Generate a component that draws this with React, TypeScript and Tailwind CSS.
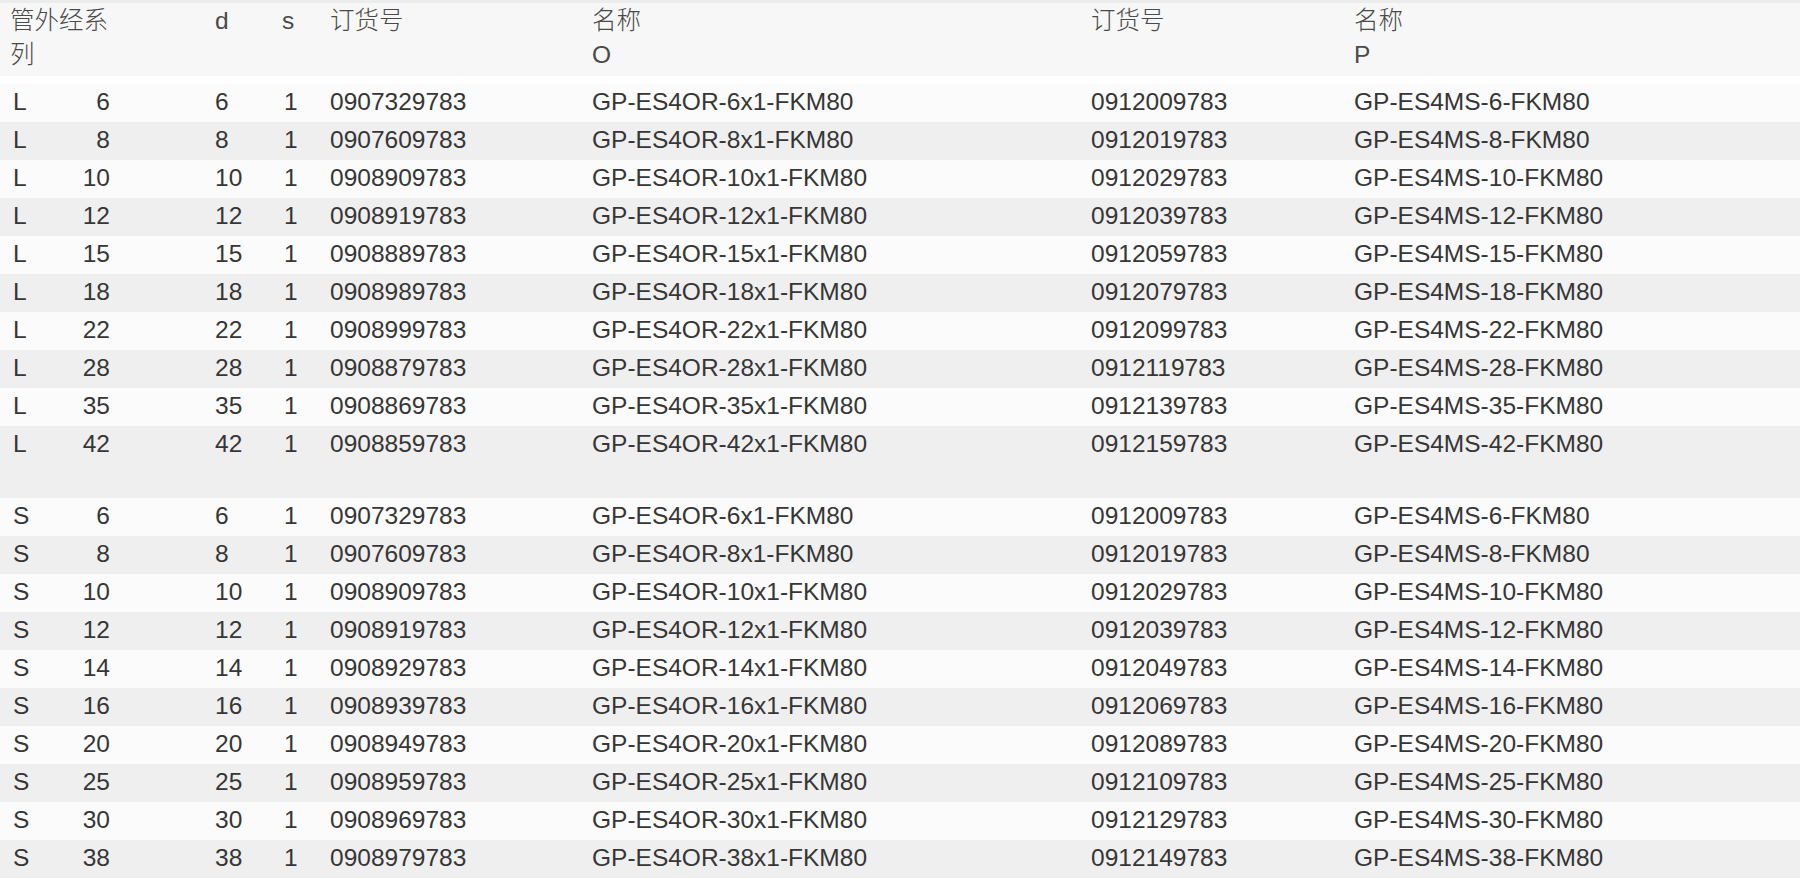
const L_ROWS: [number, string, string][] = [
  [6, "0907329783", "0912009783"],
  [8, "0907609783", "0912019783"],
  [10, "0908909783", "0912029783"],
  [12, "0908919783", "0912039783"],
  [15, "0908889783", "0912059783"],
  [18, "0908989783", "0912079783"],
  [22, "0908999783", "0912099783"],
  [28, "0908879783", "0912119783"],
  [35, "0908869783", "0912139783"],
  [42, "0908859783", "0912159783"],
]

const S_ROWS: [number, string, string][] = [
  [6, "0907329783", "0912009783"],
  [8, "0907609783", "0912019783"],
  [10, "0908909783", "0912029783"],
  [12, "0908919783", "0912039783"],
  [14, "0908929783", "0912049783"],
  [16, "0908939783", "0912069783"],
  [20, "0908949783", "0912089783"],
  [25, "0908959783", "0912109783"],
  [30, "0908969783", "0912129783"],
  [38, "0908979783", "0912149783"],
]

const cols = "grid grid-cols-[40px_164px_69px_46px_262px_499px_263px_1fr] pl-[11px]"

function Row({ series, d, o, p, gray, tall }: { series: string; d: number; o: string; p: string; gray: boolean; tall?: boolean }) {
  return (
    <div className={`${cols} pt-[1px] pb-[3px] ${tall ? "h-[72px]" : "h-[38px]"} ${gray ? "bg-[#efefef]" : "bg-[#fbfbfb]"}`}>
      <div className="pl-[2px]">{series}</div>
      <div className="text-right pr-[105px]">{d}</div>
      <div>{d}</div>
      <div>1</div>
      <div>{o}</div>
      <div>{`GP-ES4OR-${d}x1-FKM80`}</div>
      <div>{p}</div>
      <div>{`GP-ES4MS-${d}-FKM80`}</div>
    </div>
  )
}

export default function App() {
  return (
    <div
      className="w-[1800px] h-[879px] overflow-hidden bg-white text-[24.5px] leading-[34px] font-light text-[#363636]"
      style={{ fontFamily: '"Liberation Sans", "Noto Sans CJK SC", sans-serif' }}
    >
      <div className="h-[3px] bg-[#ececec]" />
      <div className={`${cols} h-[73px] pt-[1px] bg-[#f7f7f7] text-[#4a4a4a]`}>
        <div className="col-span-2 max-w-[100px] -ml-[1px]">管外经系列</div>
        <div>d</div>
        <div className="-ml-[2px]">s</div>
        <div>订货号</div>
        <div>
          <div>名称</div>
          <div>O</div>
        </div>
        <div>订货号</div>
        <div>
          <div>名称</div>
          <div>P</div>
        </div>
      </div>
      <div className="h-[8px] bg-white" />
      {L_ROWS.map(([d, o, p], i) => (
        <Row key={`L${d}`} series="L" d={d} o={o} p={p} gray={i % 2 === 1} tall={i === L_ROWS.length - 1} />
      ))}
      {S_ROWS.map(([d, o, p], i) => (
        <Row key={`S${d}`} series="S" d={d} o={o} p={p} gray={i % 2 === 1} />
      ))}
    </div>
  )
}
